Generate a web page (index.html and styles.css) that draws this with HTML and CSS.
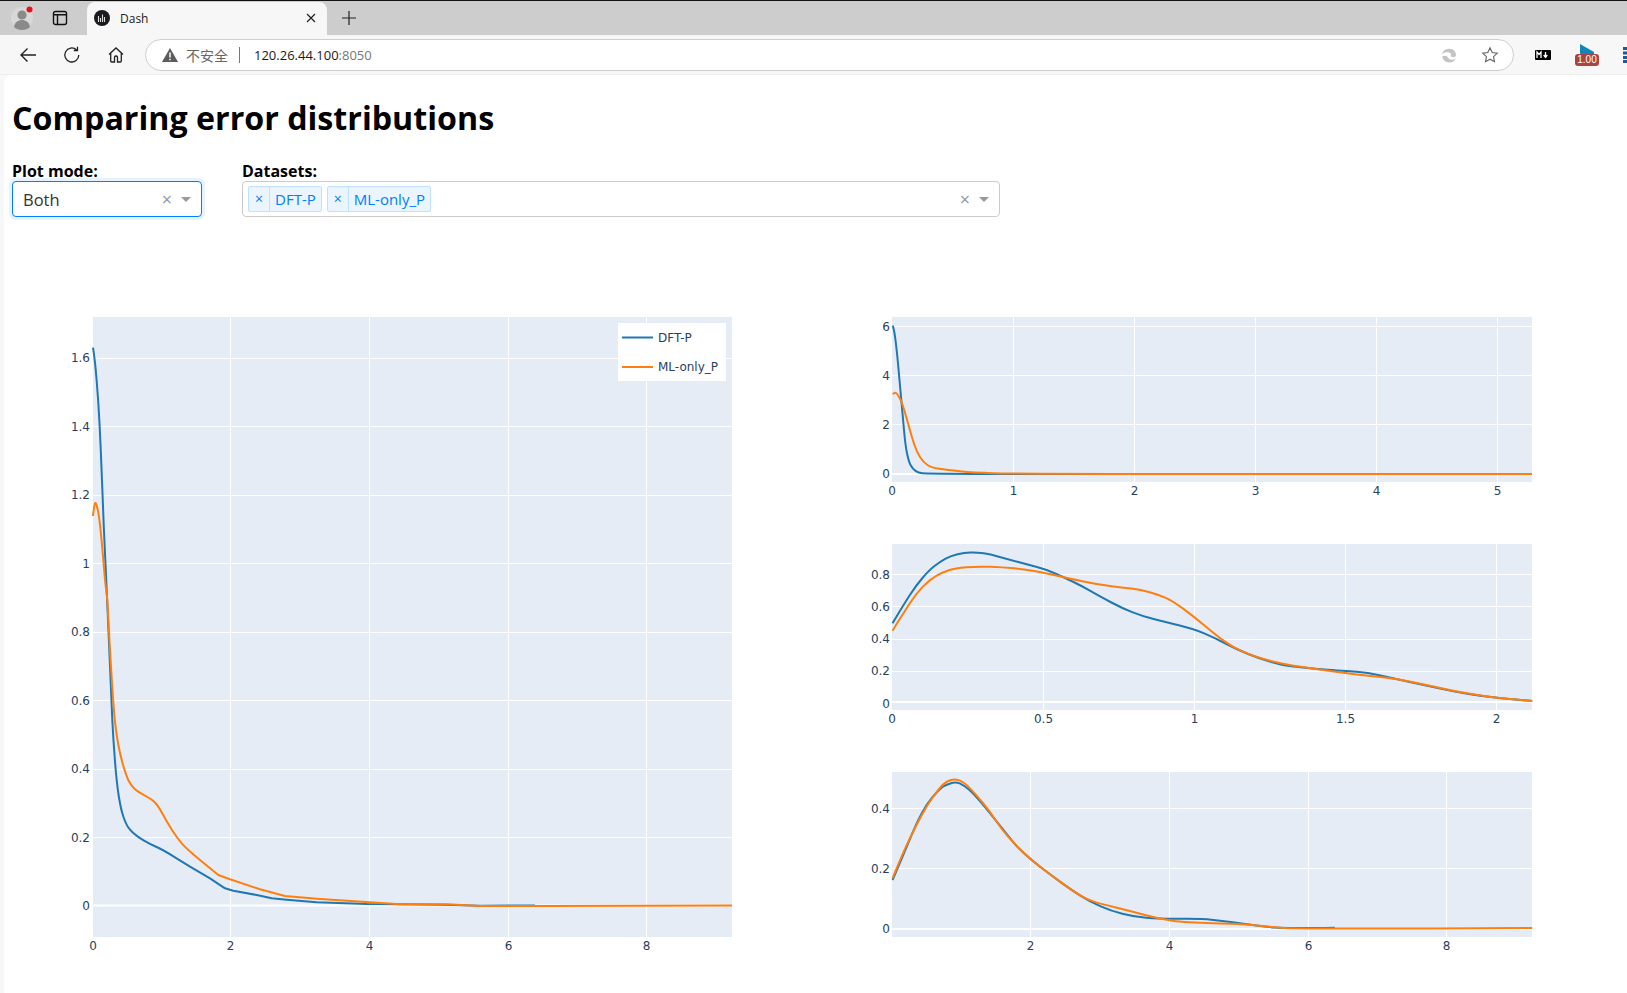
FILE: index.html
```html
<!DOCTYPE html>
<html lang="zh">
<head>
<meta charset="utf-8">
<title>Dash</title>
<link rel="stylesheet" href="styles.css">
</head>
<body>
<div class="tabstrip">
  <svg class="ic-avatar" viewBox="0 0 24 24" width="24" height="24"><circle cx="12" cy="12" r="11" fill="#d8d8d8"/><circle cx="12" cy="9" r="4.6" fill="#8a8a8a"/><path d="M4 21c1-5 4-7 8-7s7 2 8 7c-2 2-5 3-8 3s-6-1-8-3z" fill="#8a8a8a"/><circle cx="19.500" cy="3.500" r="3" fill="#e8101a"/></svg>
  <svg class="ic-side" viewBox="0 0 16 16" width="16" height="16"><rect x="1.500" y="1.500" width="13" height="13" rx="2" fill="none" stroke="#111" stroke-width="1.400"/><path d="M1.500 4.800h13M5.500 4.800v9.700" fill="none" stroke="#111" stroke-width="1.400"/></svg>
  <div class="tab">
    <svg viewBox="0 0 16 16" width="16" height="16"><circle cx="8" cy="8" r="8" fill="#1b1b1f"/><path d="M4.500 6v6M6.500 8v4M8.500 4.500V12M10.500 7v5" stroke="#ddd" stroke-width="1.100"/></svg>
    <span class="tab-title">Dash</span>
    <svg class="tab-close" viewBox="0 0 10 10" width="10" height="10"><path d="M1 1l8 8M9 1l-8 8" stroke="#222" stroke-width="1.200"/></svg>
  </div>
  <svg class="ic-plus" viewBox="0 0 16 16" width="16" height="16"><path d="M8 1v14M1 8h14" stroke="#222" stroke-width="1.200"/></svg>
</div>
<div class="toolbar">
  <svg class="tool" viewBox="0 0 18 18" width="18" height="18"><path d="M17 9H2M8.500 2.500L2 9l6.500 6.500" fill="none" stroke="#222" stroke-width="1.400"/></svg>
  <svg class="tool" viewBox="0 0 18 18" width="18" height="18"><path d="M15.800 9a7 7 0 1 1-2.300-5.200M14.500 .8v3.700h-3.700" fill="none" stroke="#222" stroke-width="1.300"/></svg>
  <svg class="tool" viewBox="0 0 18 18" width="18" height="18"><path d="M2 8.500L9 2l7 6.500M3.700 7.200V15a1 1 0 0 0 1 1h2.800v-4.500a1.500 1.500 0 0 1 3 0V16h2.800a1 1 0 0 0 1-1V7.200" fill="none" stroke="#222" stroke-width="1.300"/></svg>
  <div class="address">
    <svg viewBox="0 0 16 14" width="16" height="14"><path d="M8 0l8 14H0z" fill="#5c5c5c"/><path d="M8 4.500v5M8 10.700v1.600" stroke="#fff" stroke-width="1.500"/></svg>
    <span class="insecure">不安全</span>
    <span class="sep"></span>
    <span class="url">120.26.44.100<span class="port">:8050</span></span>
    <span class="spacer"></span>
    <svg class="addr-edge" viewBox="0 0 16 16" width="16" height="16"><path d="M1 7.500a7.200 7.200 0 0 1 14-.5c.4 2.500-2 3.800-4 3-1.500-.6-1.500-2-.8-2.800C8.500 4.800 3.500 4.500 1 7.500zM1.200 9.500c2.500-1.500 5-.8 6 1.200 1.200 2.200 4.500 2.600 7.400 1A7.200 7.200 0 0 1 1.200 9.500z" fill="#c4c4c4"/></svg>
    <svg class="addr-star" viewBox="0 0 18 18" width="18" height="18"><path d="M9 1.800l2.200 4.700 5.100.6-3.800 3.500 1 5.100L9 13.200l-4.500 2.500 1-5.100L1.700 7.100l5.100-.6z" fill="none" stroke="#666" stroke-width="1.100"/></svg>
  </div>
  <svg class="ext-md" viewBox="0 0 16 10" width="16" height="10"><rect width="16" height="10" rx="1" fill="#000"/><path d="M2 8V2l2 2.500L6 2v6M10.500 2v4.500M8.700 5l1.800 2.500L12.300 5" fill="none" stroke="#fff" stroke-width="1.300"/></svg>
  <div class="ext-flag">
    <svg viewBox="0 0 14 10" width="14" height="10"><path d="M0 0l14 8v2H0z" fill="#0f86bd"/></svg>
    <span class="badge">1.00</span>
  </div>
  <svg class="ext-bars" viewBox="0 0 4 16" width="4" height="16"><path d="M0 0h4v3H0zM0 4.500h4v3H0zM0 9h4v3H0zM0 13h4v3H0z" fill="#1f5a96"/></svg>
</div>
<div class="viewport">
  <main class="page">
    <h1 class="title">Comparing error distributions</h1>
    <div class="controls">
      <div class="control control-mode">
        <label class="label">Plot mode:</label>
        <div class="select select-focus">
          <span class="value">Both</span>
          <span class="clear">×</span>
          <span class="arrow"></span>
        </div>
      </div>
      <div class="control control-data">
        <label class="label">Datasets:</label>
        <div class="select">
          <span class="tag"><span class="tag-x">×</span><span class="tag-name">DFT-P</span></span>
          <span class="tag"><span class="tag-x">×</span><span class="tag-name">ML-only_P</span></span>
          <span class="spacer"></span>
          <span class="clear">×</span>
          <span class="arrow"></span>
        </div>
      </div>
    </div>
    <div class="charts">
      <svg class="chart" viewBox="0 0 800 760" width="800" height="760">
        <rect class="bg" x="81" y="100" width="639" height="620"/>
        <path class="grid" d="M218.500 100v620M357.500 100v620M496.500 100v620M634.500 100v620M81 141.500h639M81 209.500h639M81 278.500h639M81 346.500h639M81 415.500h639M81 483.500h639M81 552.500h639M81 620.500h639"/>
        <path class="zero" d="M81 688.500h639"/>
        <path class="blue" d="M81 130.700Q83 143 84.600 163Q86.300 183 87.500 206Q88.700 229.700 89.700 256Q90.700 283 91.800 310L95 379.700L97.300 433Q99.300 483 100.300 503Q101.300 523 103 544.500Q104.700 566 106.800 579.500Q109 593 111.500 600Q114 607 116 610Q118 613 121.600 616.300Q125.300 619.700 131.600 623.300Q138 627 144.600 630Q151.300 633 163 640.300L178 649.700L198 661.300L213 671.300L221.300 673.700L244.700 678L259.700 681.300L274.700 682.700L304.700 685.300L354.700 687L384.700 687.300L431.300 687.700L468 688.800L523 688.400"/>
        <path class="orange" d="M81 299Q82.300 287 83.200 286Q84 285.300 85.300 290.800Q86.700 296.300 88.200 309.600Q89.700 323 93 363L95.300 383L98 433Q101.300 489.700 103 504.700Q104.700 519.700 106.700 529.700Q108.700 539.700 111.300 548.800Q114 558 116.300 563Q118.700 568 122 571.300Q125.300 574.700 132.500 578.300Q139.700 582 143 585.500Q146.300 589 150.500 596.800Q154.700 604.700 160 613Q165.300 621.300 170 626.600Q174.700 632 188 643L206.300 658L218 662.300L248 672.300L273 679L304.700 681.700L358 685.300L388 687.300L434.700 687.300L468 689L538 689L720 688.500"/>
        <g class="tick end">
          <text x="78" y="145">1.6</text><text x="78" y="214">1.4</text><text x="78" y="282">1.2</text><text x="78" y="351">1</text><text x="78" y="419">0.8</text><text x="78" y="488">0.6</text><text x="78" y="556">0.4</text><text x="78" y="625">0.2</text><text x="78" y="693">0</text>
        </g>
        <g class="tick mid">
          <text x="81" y="733">0</text><text x="218.500" y="733">2</text><text x="357.500" y="733">4</text><text x="496.500" y="733">6</text><text x="634.500" y="733">8</text>
        </g>
        <rect class="legend" x="606" y="106" width="108" height="58"/>
        <path class="blue" d="M610 120.500h31"/>
        <path class="orange" d="M610 150h31"/>
        <text class="tick" x="646" y="125">DFT-P</text>
        <text class="tick" x="646" y="154">ML-only_P</text>
      </svg>
      <svg class="chart" viewBox="0 0 800 760" width="800" height="760">
        <rect class="bg" x="80" y="100" width="640" height="165"/>
        <path class="grid" d="M201.500 100v165M322.500 100v165M443.500 100v165M564.500 100v165M685.500 100v165M80 109.500h640M80 158.500h640M80 207.500h640"/>
        <path class="zero" d="M80 257h640"/>
        <path class="blue" d="M80.700 108.700Q82.300 113 83.800 125.500Q85.300 138 86.600 153Q88 168 89.300 183Q90.700 198 92 213Q93.300 228 95 236.300Q96.700 244.700 98.700 248.300Q100.700 252 103.500 253.800Q106.300 255.700 110.500 256.200Q114.700 256.700 201.300 257L720 257"/>
        <path class="orange" d="M80.700 177.300Q83 175 84.100 176Q85.300 176.700 87.500 180.700Q89.700 184.700 92.200 193Q94.700 201.300 97.200 210.500Q99.700 219.700 102.200 227.200Q104.700 234.700 108 240Q111.300 245.300 115.500 248Q119.700 250.700 127.200 251.800Q134.700 253 148 254.300Q161.300 255.700 181.300 256.200Q201.300 256.700 348 257L720 257"/>
        <g class="tick end">
          <text x="78" y="114">6</text><text x="78" y="163">4</text><text x="78" y="212">2</text><text x="78" y="261">0</text>
        </g>
        <g class="tick mid">
          <text x="80" y="278">0</text><text x="201.500" y="278">1</text><text x="322.500" y="278">2</text><text x="443.500" y="278">3</text><text x="564.500" y="278">4</text><text x="685.500" y="278">5</text>
        </g>

        <rect class="bg" x="80" y="327" width="640" height="166"/>
        <path class="grid" d="M231.500 327v166M382.500 327v166M533.500 327v166M684.500 327v166M80 357.500h640M80 389.500h640M80 422.500h640M80 454.500h640"/>
        <path class="zero" d="M80 485h640"/>
        <g transform="translate(48 318) scale(.4337 .3333)">
          <path class="blue scaled" d="M75 265Q100 210 115 180Q130 150 145 127.500Q160 105 172.500 92.500Q185 80 197.500 71Q210 62 225 57.500Q240 53 255 52.500Q270 52 285 55Q300 58 320 65Q340 72 365 81Q390 90 410 97Q430 104 450 115.500Q470 127 490 139.500Q510 152 530 167Q550 182 577.500 201Q605 220 627.500 231.500Q650 243 675 251.500Q700 260 735 271Q770 282 795 296Q820 310 845 327Q870 344 895 357Q920 370 945 380Q970 390 995 394Q1020 398 1050 401.500Q1080 405 1100 406.500Q1120 408 1145 410.500Q1170 413 1200 421.500Q1230 430 1265 440Q1300 450 1335 460Q1370 470 1400 476Q1430 482 1460 487Q1490 492 1550 498"/>
          <path class="orange scaled" d="M75 287Q100 235 115 205Q130 175 145 155Q160 135 175 123.500Q190 112 205 106Q220 100 245 97Q270 94 300 95.500Q330 97 355 100Q380 103 405 109Q430 115 455 122.500Q480 130 515 139.500Q550 149 580 153.500Q610 158 630 161.500Q650 165 670 172.500Q690 180 705 188.500Q720 197 745 221Q770 245 795 272.500Q820 300 840 318.500Q860 337 880 348.500Q900 360 925 370Q950 380 975 386Q1000 392 1025 397Q1050 402 1080 407.500Q1110 413 1140 417.500Q1170 422 1205 427Q1240 432 1270 440Q1300 448 1335 458Q1370 468 1400 475Q1430 482 1460 487Q1490 492 1550 498"/>
        </g>
        <g class="tick end">
          <text x="78" y="362">0.8</text><text x="78" y="394">0.6</text><text x="78" y="426">0.4</text><text x="78" y="458">0.2</text><text x="78" y="491">0</text>
        </g>
        <g class="tick mid">
          <text x="80" y="506">0</text><text x="231.500" y="506">0.5</text><text x="382.500" y="506">1</text><text x="533.500" y="506">1.5</text><text x="684.500" y="506">2</text>
        </g>

        <rect class="bg" x="80" y="555" width="640" height="165"/>
        <path class="grid" d="M218.500 555v165M357.500 555v165M496.500 555v165M634.500 555v165M80 591.500h640M80 651.500h640"/>
        <path class="zero" d="M80 712h640"/>
        <g transform="translate(48 543) scale(.4337 .3333)">
          <path class="blue scaled" d="M75 360Q100 285 115 237.500Q130 190 142.500 160Q155 130 167.500 111Q180 92 190 81Q200 73 210 69.500Q220 66 230 70Q240 76 252.500 90Q265 105 282.500 132.500Q300 160 320 192.500Q340 225 350 241.500Q360 258 377.500 279Q395 300 417.500 322.500Q440 345 465 368.500Q490 392 510 408.500Q530 425 555 439Q580 453 605 461.500Q630 470 660 473.500Q690 477 740 476.500Q790 476 810 479Q830 482 855 486Q880 490 905 495Q930 500 955 502.500Q980 505 1095 503"/>
          <path class="orange scaled" d="M75 355Q100 275 115 235Q130 195 142.500 165Q155 135 167.500 112.500Q180 90 190 75Q200 63 210 60Q220 57 230 62Q240 67 252.500 83.500Q265 100 282.500 127.500Q300 155 312.500 180Q325 205 340 227.500Q355 250 375 275Q395 300 417.500 322.500Q440 345 465 368.500Q490 392 507.500 406Q525 420 542.500 426.500Q560 433 590 442.500Q620 452 655 464.500Q690 477 720 482.500Q750 488 815 490Q880 492 905 495Q930 498 957.500 502Q985 506 1042.500 505.500Q1100 505 1175 505.500Q1250 506 1325 505.500Q1400 505 1550 504"/>
        </g>
        <g class="tick end">
          <text x="78" y="596">0.4</text><text x="78" y="656">0.2</text><text x="78" y="716">0</text>
        </g>
        <g class="tick mid">
          <text x="218.500" y="733">2</text><text x="357.500" y="733">4</text><text x="496.500" y="733">6</text><text x="634.500" y="733">8</text>
        </g>
      </svg>
    </div>
  </main>
</div>
</body>
</html>
```
FILE: styles.css
```css
* { box-sizing: border-box; }
html, body { margin: 0; height: 100%; }
body {
  height: 993px;
  overflow: hidden;
  background: #f7f7f7;
  font-family: "Open Sans", "Noto Sans CJK SC", sans-serif;
  display: flex;
  flex-direction: column;
}

/* browser chrome */
.tabstrip {
  height: 35px;
  flex: none;
  background: #cdcdcd;
  border-top: 1px solid #111;
  display: flex;
  align-items: center;
  padding-left: 10px;
}
.ic-side { margin-left: 18px; }
.tab {
  width: 240px;
  height: 33px;
  margin-left: 19px;
  margin-top: 1px;
  padding: 0 11px 1px 7px;
  background: #f7f7f7;
  border-radius: 8px 8px 0 0;
  display: flex;
  align-items: center;
}
.tab-title {
  margin-left: 10px;
  font-size: 12px;
  color: #222;
  flex: 1;
}
.ic-plus { margin-left: 14px; }
.toolbar {
  height: 40px;
  flex: none;
  background: #f7f7f7;
  display: flex;
  align-items: center;
  border-bottom: 1px solid #eeeeee;
}
.tool { margin-left: 19px; margin-right: 7px; flex: none; }
.address {
  width: 1369px;
  height: 32px;
  margin-left: 13px;
  background: #fff;
  border: 1px solid #cfcfcf;
  border-radius: 16px;
  display: flex;
  align-items: center;
  padding: 0 14px 0 16px;
  flex: none;
}
.insecure { margin-left: 8px; font-size: 14px; color: #666; font-family: "Noto Sans CJK SC", sans-serif; }
.sep { width: 1px; height: 16px; background: #777; margin: 0 14px 0 11px; }
.url { font-size: 13px; color: #1a1a1a; }
.port { color: #777; }
.spacer { flex: 1; }
.addr-star { margin-left: 24px; }
.ext-md { margin-left: 21px; flex: none; }
.ext-flag {
  position: relative;
  width: 24px;
  height: 22px;
  margin-left: 24px;
  flex: none;
}
.ext-flag svg { position: absolute; left: 5px; top: 0; }
.badge {
  position: absolute;
  left: 0;
  top: 10px;
  width: 24px;
  height: 12px;
  border-radius: 3px;
  background: #a94442;
  color: #fff;
  font: 10px/12px "Liberation Sans", sans-serif;
  text-align: center;
}
.ext-bars { margin-left: 24px; flex: none; }

/* page */
.viewport { flex: 1; padding-left: 4px; min-height: 0; }
.page {
  height: 100%;
  background: #fff;
  border-radius: 8px 0 0 0;
  padding-left: 8px;
  overflow: hidden;
}
.title {
  margin: 0;
  padding-top: 20px;
  height: 85px;
  font-family: "Open Sans", sans-serif;
  font-size: 32.200px;
  line-height: 46px;
  font-weight: 700;
  color: #000;
}
.controls { display: flex; gap: 40px; align-items: flex-start; height: 57px; }
.control-mode { width: 190px; }
.control-data { width: 758px; }
.label {
  display: block;
  height: 21px;
  font-size: 16px;
  line-height: 23px;
  font-weight: 700;
  color: #000;
}
.select {
  height: 36px;
  border: 1px solid #ccc;
  border-radius: 4px;
  display: flex;
  align-items: center;
  padding: 0 10px 0 5px;
  background: #fff;
}
.select-focus {
  border-color: #007eff;
  box-shadow: 0 0 0 3px rgba(0, 126, 255, .1);
  padding-left: 10px;
}
.value { flex: 1; font-size: 16.500px; color: #333; }
.clear { font-size: 18px; color: #999; width: 12px; text-align: center; line-height: 18px; }
.arrow {
  width: 0;
  height: 0;
  margin-left: 8px;
  border: 5px solid transparent;
  border-top-color: #999;
  border-bottom: 0;
}
.tag {
  display: flex;
  height: 26px;
  margin-right: 5px;
  background: #ebf5ff;
  border: 1px solid #c2e0ff;
  border-radius: 2px;
  color: #007eff;
  font-size: 15px;
  line-height: 24px;
}
.tag-x { width: 21px; text-align: center; border-right: 1px solid #c2e0ff; font-size: 14px; }
.tag-name { padding: 0 5px; }

/* charts */
.charts { display: grid; grid-template-columns: 800px 800px; }
.chart { display: block; }
.bg { fill: #e5ecf6; }
.grid { stroke: #fff; stroke-width: 1; fill: none; }
.zero { stroke: #fff; stroke-width: 2; fill: none; }
.blue, .orange { fill: none; stroke-width: 2; stroke-linejoin: round; }
.blue { stroke: #1f77b4; }
.orange { stroke: #ff7f0e; }
.scaled { vector-effect: non-scaling-stroke; }
.tick { font-family: "DejaVu Sans", sans-serif; font-size: 12px; fill: #2a3f5f; }
.end { text-anchor: end; }
.mid { text-anchor: middle; }
.legend { fill: #fff; }
```
